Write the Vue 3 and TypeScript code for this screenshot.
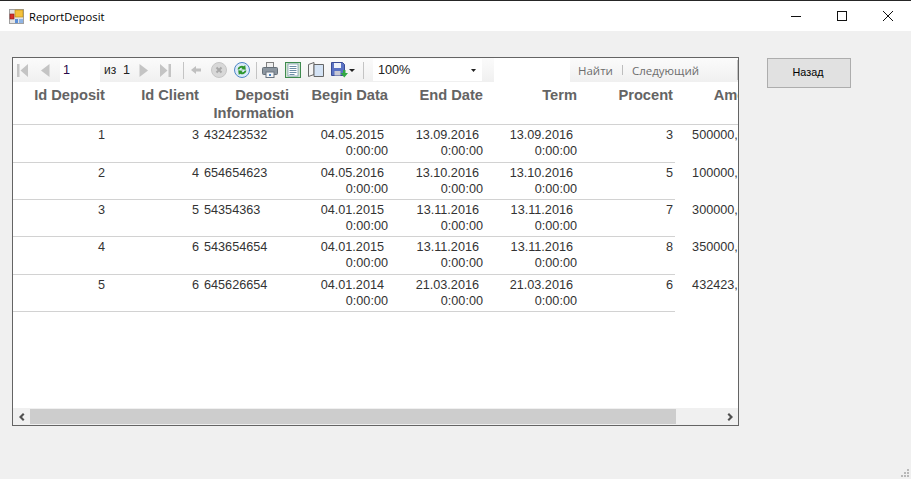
<script setup lang="ts">
interface Deposit {
  id: number
  client: number
  info: string
  begin: string
  end: string
  percent: number
  amount: string
}

const columns = ['Id Deposit', 'Id Client', 'Deposti', 'Begin Data', 'End Date', 'Term', 'Procent', 'Amount']

const deposits: Deposit[] = [
  { id: 1, client: 3, info: '432423532', begin: '04.05.2015', end: '13.09.2016', percent: 3, amount: '500000,0000' },
  { id: 2, client: 4, info: '654654623', begin: '04.05.2016', end: '13.10.2016', percent: 5, amount: '100000,0000' },
  { id: 3, client: 5, info: '54354363', begin: '04.01.2015', end: '13.11.2016', percent: 7, amount: '300000,0000' },
  { id: 4, client: 6, info: '543654654', begin: '04.01.2015', end: '13.11.2016', percent: 8, amount: '350000,0000' },
  { id: 5, client: 6, info: '645626654', begin: '04.01.2014', end: '21.03.2016', percent: 6, amount: '432423,0000' }
]
</script>

<template>
  <div class="window">
    <header class="titlebar">
      <svg class="app-icon" width="15" height="15" viewBox="0 0 15 15">
        <rect x="0.5" y="0.5" width="14" height="14" fill="#e4e4e4" stroke="#a0a0a0" />
        <rect x="6" y="1" width="8" height="7" fill="#f4c13c" stroke="#b8860b" stroke-width="0.6" />
        <rect x="1" y="5" width="4" height="5" fill="#d8302a" stroke="#8a1a14" stroke-width="0.6" />
        <rect x="6" y="10" width="3" height="4" fill="#5b8fd8" />
        <rect x="10" y="10" width="4" height="4" fill="#8fb4e4" />
      </svg>
      <span class="title">ReportDeposit</span>
      <div class="caption-buttons">
        <svg width="46" height="30" viewBox="0 0 46 30"><path d="M18 15.500h10" stroke="#111" fill="none" /></svg>
        <svg width="46" height="30" viewBox="0 0 46 30"><rect x="18.500" y="10.500" width="9" height="9" stroke="#111" fill="none" /></svg>
        <svg width="46" height="30" viewBox="0 0 46 30"><path d="M18 10l10 10M28 10l-10 10" stroke="#111" fill="none" /></svg>
      </div>
    </header>

    <main class="content">
      <section class="viewer">
        <div class="toolbar">
          <svg class="ic first" width="11" height="13" viewBox="0 0 11 13"><path d="M0 0h2.500v13H0zM11 0v13L3.500 6.500z" fill="#c4c4c4" /></svg>
          <svg class="ic prev" width="9" height="13" viewBox="0 0 9 13"><path d="M8.500 0v13L0 6.500z" fill="#c4c4c4" /></svg>
          <div class="page-input">1</div>
          <span class="of">из</span>
          <span class="total">1</span>
          <svg class="ic next" width="9" height="13" viewBox="0 0 9 13"><path d="M.5 0v13L9 6.500z" fill="#c4c4c4" /></svg>
          <svg class="ic last" width="11" height="13" viewBox="0 0 11 13"><path d="M8.500 0H11v13H8.500zM0 0v13l7.500-6.500z" fill="#c4c4c4" /></svg>
          <i class="sep sep-a"></i>
          <svg class="ic back" width="10" height="10" viewBox="0 0 10 10"><path d="M5 1v2.500h5v3H5V9L0 5z" fill="#c0c0c0" /></svg>
          <svg class="ic stop" width="16" height="16" viewBox="0 0 16 16">
            <circle cx="8" cy="8" r="7.500" fill="#d8d8d8" stroke="#c6c6c6" />
            <path d="M5.500 5.500l5 5M10.500 5.500l-5 5" stroke="#a8a8a8" stroke-width="2" />
          </svg>
          <svg class="ic refresh" width="16" height="16" viewBox="0 0 16 16">
            <circle cx="8" cy="8" r="7.500" fill="#dcebfa" stroke="#4f86c6" />
            <path d="M3.500 7.500a4.500 4.500 0 0 1 6.500-3.300l1.200-1.200.6 4.800-4.600-.6 1.200-1.300a2.600 2.600 0 0 0-3.200 1.600z" fill="#2f962f" />
            <path d="M12.500 8.500a4.500 4.500 0 0 1-6.500 3.300l-1.200 1.200-.6-4.800 4.600.6-1.200 1.300a2.600 2.600 0 0 0 3.200-1.600z" fill="#2f962f" />
          </svg>
          <i class="sep sep-b"></i>
          <svg class="ic print" width="16" height="16" viewBox="0 0 16 16">
            <rect x="4.500" y="0.500" width="7" height="5" fill="#f0f0f0" stroke="#808080" />
            <rect x="0.500" y="5.500" width="15" height="7" rx="1" fill="#8c96a0" stroke="#667079" />
            <rect x="4" y="10" width="8" height="5.500" fill="#f4f6f8" stroke="#6a7480" />
            <rect x="7" y="12" width="2" height="2" fill="#4f86c6" />
          </svg>
          <svg class="ic page" width="16" height="16" viewBox="0 0 16 16">
            <rect x="0.500" y="0.500" width="15" height="15" fill="#cfe6cf" stroke="#3f8a4f" />
            <rect x="3" y="2" width="10" height="12" fill="#fff" stroke="#6f8fa8" stroke-width="0.700" />
            <path d="M4.500 4.500h7M4.500 6.500h7M4.500 8.500h7M4.500 10.500h7M4.500 12.500h5" stroke="#6f8fa8" />
          </svg>
          <svg class="ic book" width="16" height="16" viewBox="0 0 16 16">
            <path d="M.5 2.500l5.500-2v12l-5.500 2z" fill="#f4f4f4" stroke="#666" />
            <path d="M6 2.500h9.500v12H6z" fill="#d4e3f5" stroke="#666" />
          </svg>
          <svg class="ic save" width="17" height="16" viewBox="0 0 17 16">
            <path d="M.5 .5h11l2 2v11h-13z" fill="#5a72c4" stroke="#3a4c96" />
            <rect x="3" y="1" width="7" height="5" fill="#eef2fa" />
            <rect x="3.500" y="9" width="6" height="4.500" fill="#c8c8d4" />
            <path d="M12 8h2.500v3h2.500l-3.700 4.500L9.500 11H12z" fill="#32a844" />
          </svg>
          <svg class="ic caret-save" width="6" height="3" viewBox="0 0 6 3"><path d="M0 0h6L3 3z" fill="#222" /></svg>
          <i class="sep sep-c"></i>
          <div class="zoom-box">
            <span>100%</span>
            <svg width="5" height="3" viewBox="0 0 5 3"><path d="M0 0h5L2.500 3z" fill="#222" /></svg>
          </div>
          <div class="find-box"></div>
          <span class="link find">Найти</span>
          <i class="pipe"></i>
          <span class="link">Следующий</span>
          <i class="sep sep-d"></i>
        </div>

        <div class="report">
          <div class="row head">
            <div v-for="(col, i) in columns" :key="col" class="cell">
              <template v-if="i === 2"><span class="hang">{{ col }}</span><br />Information</template>
              <template v-else>{{ col }}</template>
            </div>
          </div>
          <div v-for="d in deposits" :key="d.id" class="row">
            <div class="cell lined">{{ d.id }}</div>
            <div class="cell lined">{{ d.client }}</div>
            <div class="cell lined left">{{ d.info }}</div>
            <div class="cell lined"><span class="date">{{ d.begin }}</span><br />0:00:00</div>
            <div class="cell lined"><span class="date">{{ d.end }}</span><br />0:00:00</div>
            <div class="cell lined"><span class="date">{{ d.end }}</span><br />0:00:00</div>
            <div class="cell lined">{{ d.percent }}</div>
            <div class="cell amount">{{ d.amount }}</div>
          </div>
        </div>

        <div class="hscroll">
          <svg width="8" height="8" viewBox="0 0 8 8"><path d="M6 0l1.500 1.500L5 4l2.500 2.500L6 8 2 4z" fill="#505050" /></svg>
          <div class="thumb"></div>
          <svg class="arrow-right" width="8" height="8" viewBox="0 0 8 8"><path d="M2 0L.5 1.500 3 4 .5 6.500 2 8l4-4z" fill="#505050" /></svg>
        </div>
      </section>

      <button class="back-btn" type="button">Назад</button>
    </main>

    <div class="grip">
      <i v-for="n in 6" :key="n"></i>
    </div>
  </div>
</template>

<style scoped>
.window {
  position: relative;
  width: 911px;
  height: 479px;
  background: #f0f0f0;
  overflow: hidden;
  display: flex;
  flex-direction: column;
  font-family: "Liberation Sans", Arial, sans-serif;
}

.titlebar {
  height: 30px;
  background: #fff;
  border-top: 1px solid #262626;
  display: flex;
  align-items: center;
  padding-left: 9px;
  flex-shrink: 0;
}
.app-icon {
  margin-right: 5px;
}
.title {
  font-family: "Open Sans", sans-serif;
  font-size: 11.2px;
  color: #000;
}
.caption-buttons {
  margin-left: auto;
  display: flex;
}
.caption-buttons svg {
  display: block;
}

.content {
  display: flex;
  align-items: flex-start;
  padding: 26px 0 0 12px;
}

.viewer {
  width: 727px;
  height: 369px;
  box-sizing: border-box;
  border: 1px solid #646464;
  background: #fff;
  display: flex;
  flex-direction: column;
  overflow: hidden;
  flex-shrink: 0;
}

.toolbar {
  height: 24px;
  flex-shrink: 0;
  display: flex;
  align-items: center;
  background: linear-gradient(#fbfbfb, #f0f0f0);
  font-size: 12.67px;
  color: #222;
}
.ic {
  display: block;
  flex-shrink: 0;
}
.first { margin-left: 4px; }
.prev { margin-left: 13px; }
.page-input {
  margin-left: 10px;
  width: 40px;
  height: 24px;
  line-height: 24px;
  padding-left: 3px;
  box-sizing: border-box;
  background: #fff;
  color: #2a0a4a;
}
.of { margin-left: 4px; font-size: 12px; width: 19px; }
.total { width: 16px; }
.last { margin-left: 12px; }
.sep {
  width: 1px;
  height: 17px;
  background: #c4c4c4;
  flex-shrink: 0;
}
.sep-a { margin-left: 12px; }
.back { margin-left: 7px; }
.stop { margin-left: 10px; }
.refresh { margin-left: 7px; }
.sep-b { margin-left: 6px; }
.print { margin-left: 5px; }
.page { margin-left: 7px; }
.book { margin-left: 7px; }
.save { margin-left: 7px; }
.caret-save { margin-left: 1px; }
.sep-c { margin-left: 8px; }

.zoom-box {
  margin-left: 9px;
  width: 109px;
  height: 22px;
  box-sizing: border-box;
  padding: 0 6px 0 5px;
  background: #fff;
  display: flex;
  align-items: center;
  justify-content: space-between;
  color: #222;
}
.find-box {
  margin-left: 12px;
  width: 76px;
  height: 24px;
  background: #fff;
}
.link {
  font-family: "Open Sans", sans-serif;
  font-size: 11.5px;
  color: #6d6d6d;
}
.find { margin-left: 8px; }
.pipe {
  width: 1px;
  height: 10px;
  background: #bdbdbd;
  margin: 0 9px 0 9px;
}
.sep-d {
  margin-left: auto;
  height: 20px;
}

.report {
  flex: 1;
  min-height: 0;
  overflow: hidden;
  font-size: 12.67px;
  line-height: 16px;
  color: #333;
  background: #fff;
}
.row {
  display: grid;
  grid-template-columns: 94px 94px 95px 94px 95px 94px 96px 94px;
  width: 756px;
  height: 37.4px;
}
.head {
  height: 42.2px;
  width: 725px;
  overflow: hidden;
  border-bottom: 1px solid #d2d2d2;
  font-size: 14.67px;
  font-weight: 700;
  color: #646464;
  line-height: 18px;
}
.head .cell {
  padding-top: 4px;
}
.head .cell:last-child {
  padding-right: 0;
}
.cell {
  text-align: right;
  padding: 2px 2px 0 0;
  box-sizing: border-box;
  white-space: nowrap;
}
.amount {
  padding-right: 3px;
}
.hang {
  margin-right: 5px;
}
.left {
  text-align: left;
  padding-left: 3px;
}
.lined {
  border-bottom: 1px solid #d2d2d2;
}
.date {
  margin-right: 4px;
}

.hscroll {
  height: 17px;
  flex-shrink: 0;
  background: #f0f0f0;
  display: flex;
  align-items: center;
  padding-left: 4px;
}
.hscroll svg {
  display: block;
  flex-shrink: 0;
}
.thumb {
  width: 646px;
  height: 15px;
  margin-left: 5px;
  background: #cdcdcd;
}
.arrow-right {
  margin-left: 51px;
}

.back-btn {
  margin-left: 28px;
  margin-top: 1px;
  width: 84px;
  height: 30px;
  background: #e1e1e1;
  border: 1px solid #adadad;
  font-family: "Liberation Sans", Arial, sans-serif;
  font-size: 10.8px;
  color: #000;
  padding: 0 2px 2px 0;
}

.grip {
  position: absolute;
  right: 2px;
  bottom: 2px;
  width: 7px;
  height: 7px;
}
.grip i {
  position: absolute;
  width: 2px;
  height: 2px;
  background: #b8b8b8;
}
.grip i:nth-child(1) { right: 0; bottom: 6px; }
.grip i:nth-child(2) { right: 0; bottom: 3px; }
.grip i:nth-child(3) { right: 3px; bottom: 3px; }
.grip i:nth-child(4) { right: 0; bottom: 0; }
.grip i:nth-child(5) { right: 3px; bottom: 0; }
.grip i:nth-child(6) { right: 6px; bottom: 0; }
</style>
